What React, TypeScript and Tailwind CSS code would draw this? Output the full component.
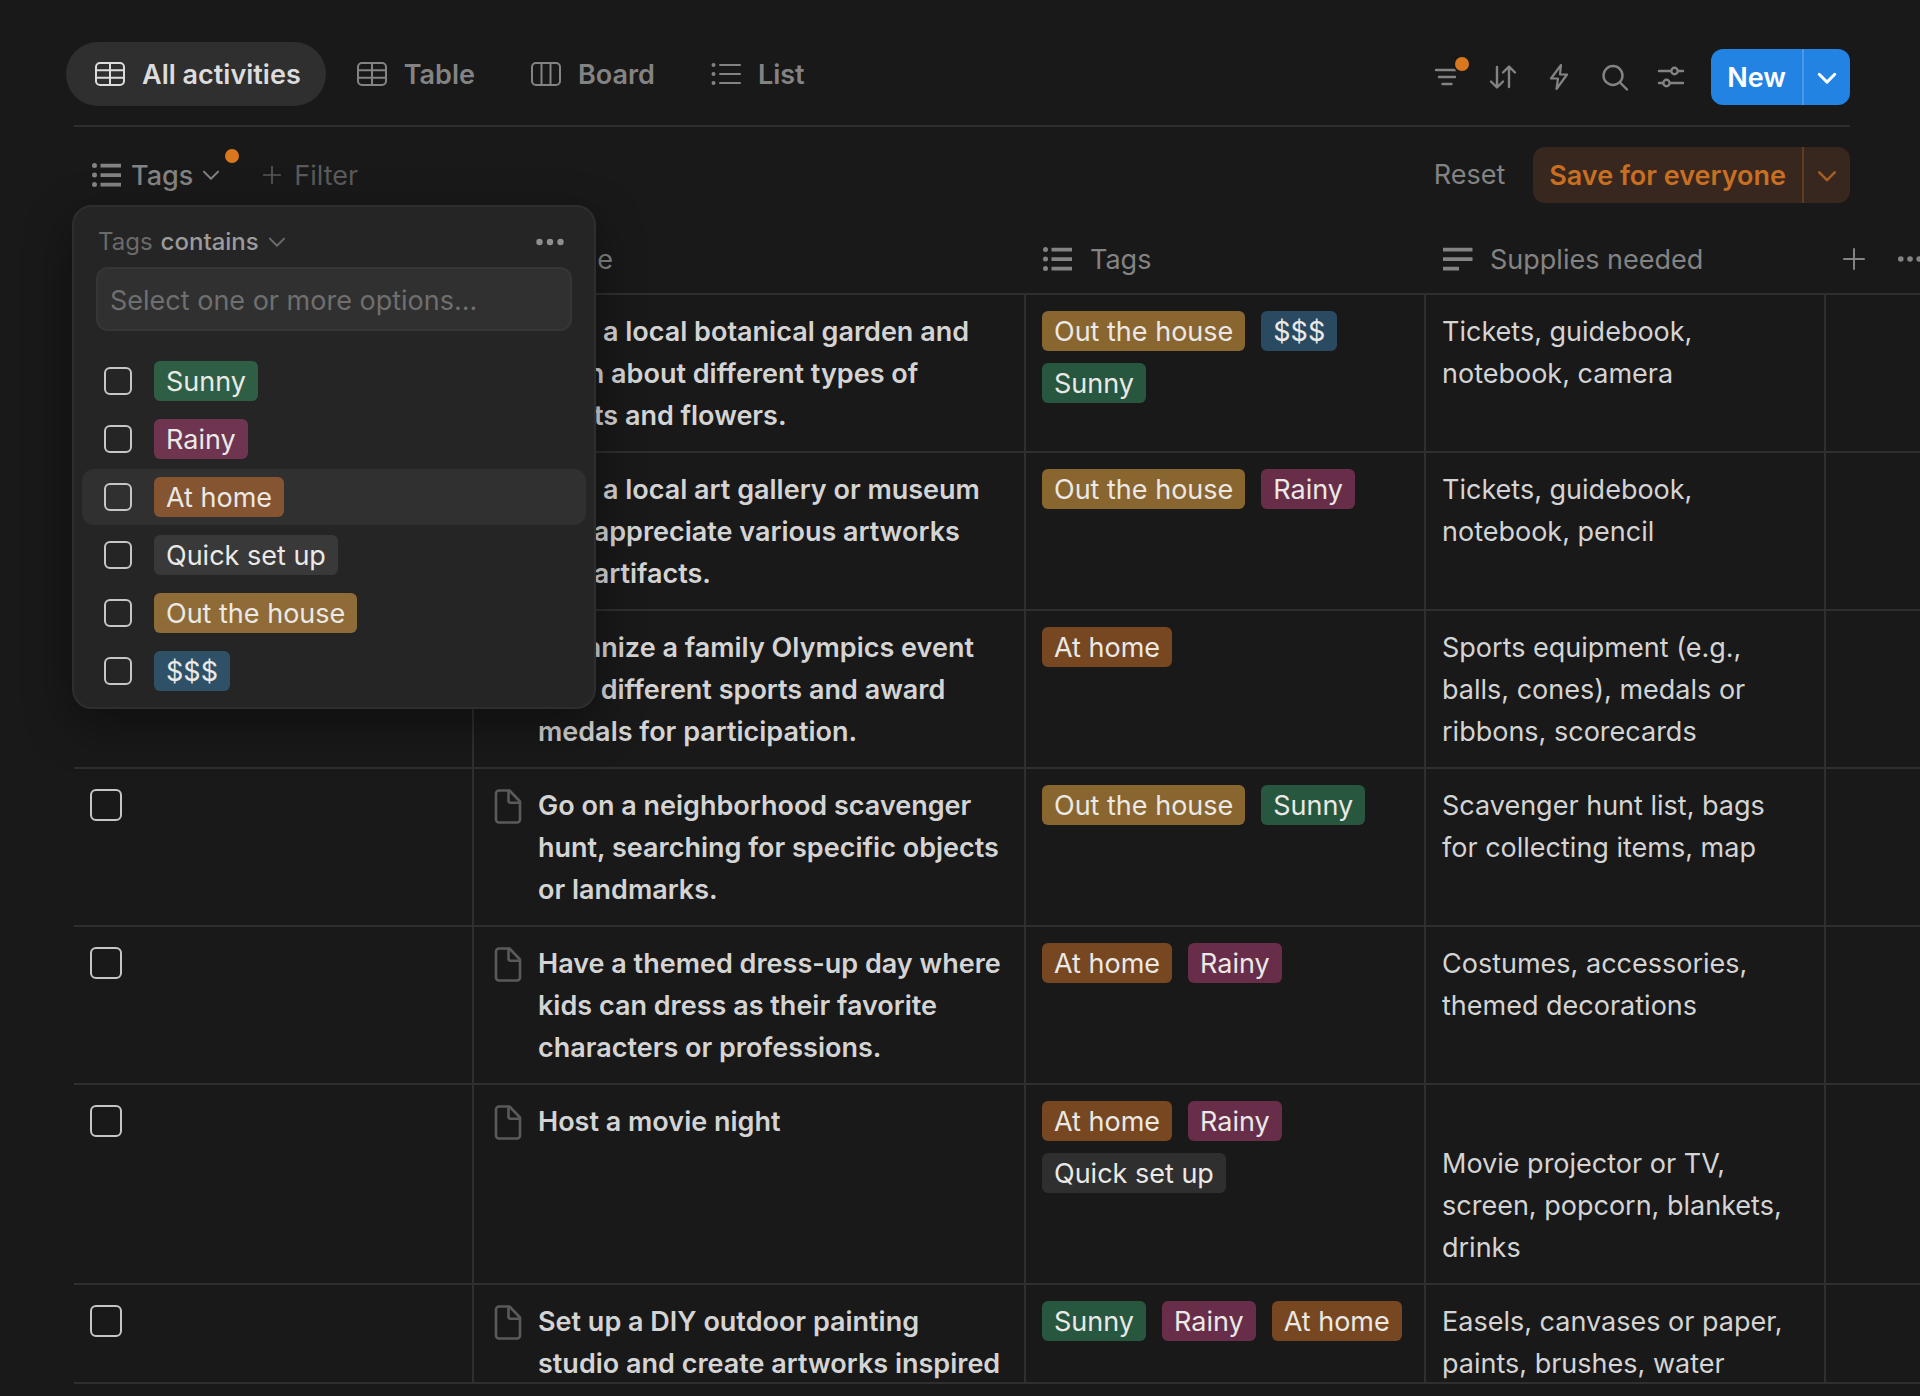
import React, { useState } from "react";

type TagName = "Sunny" | "Rainy" | "At home" | "Quick set up" | "Out the house" | "$$$";

const cellTagColors: Record<TagName, string> = {
  Sunny: "bg-[#28573f]",
  Rainy: "bg-[#682d49]",
  "At home": "bg-[#774721]",
  "Quick set up": "bg-[#2f2f2f]",
  "Out the house": "bg-[#89652f]",
  $$$: "bg-[#294a61]",
};

const menuTagColors: Record<TagName, string> = {
  Sunny: "bg-[#2e5f45]",
  Rainy: "bg-[#6e3450]",
  "At home": "bg-[#855531]",
  "Quick set up": "bg-[#393939]",
  "Out the house": "bg-[#8e6b37]",
  $$$: "bg-[#2f5168]",
};

const options: TagName[] = ["Sunny", "Rainy", "At home", "Quick set up", "Out the house", "$$$"];

const rows: { name: string; tags: TagName[]; supplies: string }[] = [
  {
    name: "Visit a local botanical garden and learn about different types of plants and flowers.",
    tags: ["Out the house", "$$$", "Sunny"],
    supplies: "Tickets, guidebook, notebook, camera",
  },
  {
    name: "Visit a local art gallery or museum and appreciate various artworks and artifacts.",
    tags: ["Out the house", "Rainy"],
    supplies: "Tickets, guidebook, notebook, pencil",
  },
  {
    name: "Organize a family Olympics event with different sports and award medals for participation.",
    tags: ["At home"],
    supplies: "Sports equipment (e.g., balls, cones), medals or ribbons, scorecards",
  },
  {
    name: "Go on a neighborhood scavenger hunt, searching for specific objects or landmarks.",
    tags: ["Out the house", "Sunny"],
    supplies: "Scavenger hunt list, bags for collecting items, map",
  },
  {
    name: "Have a themed dress-up day where kids can dress as their favorite characters or professions.",
    tags: ["At home", "Rainy"],
    supplies: "Costumes, accessories, themed decorations",
  },
  {
    name: "Host a movie night",
    tags: ["At home", "Rainy", "Quick set up"],
    supplies: "\nMovie projector or TV, screen, popcorn, blankets, drinks",
  },
  {
    name: "Set up a DIY outdoor painting studio and create artworks inspired",
    tags: ["Sunny", "Rainy", "At home"],
    supplies: "Easels, canvases or paper, paints, brushes, water",
  },
];

const stroke = {
  fill: "none",
  stroke: "currentColor",
  strokeWidth: 2,
  strokeLinecap: "round" as const,
  strokeLinejoin: "round" as const,
};

const TableIcon = () => (
  <svg className="size-8 shrink-0" viewBox="0 0 32 32" {...stroke}>
    <rect x="2" y="5" width="28" height="22" rx="4" />
    <path d="M2 12.300h28M2 19.700h28M16 5v22" />
  </svg>
);

const BoardIcon = () => (
  <svg className="size-8 shrink-0" viewBox="0 0 32 32" {...stroke}>
    <rect x="2" y="5" width="28" height="22" rx="4" />
    <path d="M11.500 5v22M20.500 5v22" />
  </svg>
);

const ListIcon = () => (
  <svg className="size-8 shrink-0" viewBox="0 0 32 32" {...stroke}>
    <path d="M10 7h20M10 16h20M10 25h20" />
    <g fill="currentColor" stroke="none">
      <circle cx="3.500" cy="7" r="2" />
      <circle cx="3.500" cy="16" r="2" />
      <circle cx="3.500" cy="25" r="2" />
    </g>
  </svg>
);

const MultiSelectIcon = () => (
  <svg className="size-8 shrink-0" viewBox="0 0 32 32" fill="currentColor">
    <circle cx="3.500" cy="6.500" r="2.500" />
    <circle cx="3.500" cy="16" r="2.500" />
    <circle cx="3.500" cy="25.500" r="2.500" />
    <path d="M9.500 4.700h20.500v3.700h-20.500zM9.500 14.200h20.500v3.700h-20.500zM9.500 23.700h20.500v3.700h-20.500z" />
  </svg>
);

const TextIcon = () => (
  <svg className="size-8 shrink-0" viewBox="0 0 32 32" fill="currentColor">
    <path d="M1 4.700h29.500v3.700H1zM1 14.200h29.500v3.700H1zM1 23.700h16v3.700H1z" />
  </svg>
);

const Chevron = ({ className }: { className: string }) => (
  <svg className={className} viewBox="0 0 24 24" {...stroke} strokeWidth={undefined}>
    <path d="M3.500 8l8.500 8.500L20.500 8" />
  </svg>
);

const PlusIcon = ({ className }: { className: string }) => (
  <svg className={className} viewBox="0 0 24 24" {...stroke}>
    <path d="M12 2v20M2 12h20" />
  </svg>
);

const DotsIcon = ({ className }: { className: string }) => (
  <svg className={className} viewBox="0 0 32 32" fill="currentColor">
    <circle cx="5.500" cy="16" r="3.200" />
    <circle cx="16" cy="16" r="3.200" />
    <circle cx="26.500" cy="16" r="3.200" />
  </svg>
);

const PageIcon = () => (
  <svg className="h-[35px] w-7 shrink-0" viewBox="0 0 28 35" {...stroke} strokeWidth="2.600">
    <path d="M15.500 1.500H5a3 3 0 0 0-3 3v26a3 3 0 0 0 3 3h18a3 3 0 0 0 3-3V12.500z" />
    <path d="M14.500 2v9.500a2.200 2.200 0 0 0 2.200 2.200H25.500" />
  </svg>
);

const FilterIcon = () => (
  <svg className="size-8" viewBox="0 0 32 32" {...stroke} strokeWidth="2.400">
    <path d="M5 9h20M8 16h16M11.500 23h9" />
  </svg>
);

const SortIcon = () => (
  <svg className="size-8" viewBox="0 0 32 32" {...stroke} strokeWidth="2.400">
    <path d="M10 6v20M4 20.500l6 6 6-6M22 26V6M16 11.500l6-6 6 6" />
  </svg>
);

const BoltIcon = () => (
  <svg className="size-8" viewBox="0 0 32 32" {...stroke} strokeWidth="2.200">
    <path d="M18 4L8 17.500h7L13.500 28 24 13.500h-7z" />
  </svg>
);

const SearchIcon = () => (
  <svg className="size-8" viewBox="0 0 32 32" {...stroke} strokeWidth="2.400">
    <circle cx="14" cy="14.500" r="9.500" />
    <path d="M21 21.500l7 7" />
  </svg>
);

const SlidersIcon = () => (
  <svg className="size-8" viewBox="0 0 32 32" {...stroke} strokeWidth="2.400">
    <path d="M4 10h12M23 10h5M4 22h4M15 22h13" />
    <circle cx="19.500" cy="10" r="3.200" />
    <circle cx="11.500" cy="22" r="3.200" />
  </svg>
);

const Tag = ({ name, color }: { name: string; color: string }) => (
  <span
    className={"inline-flex h-10 items-center whitespace-nowrap rounded-md px-3 pt-0.5 text-[27px] text-[#ebe9e6] " + color}
  >
    {name}
  </span>
);

const Label = ({ children }: { children: React.ReactNode }) => <span className="pt-0.5">{children}</span>;

const tabs = [
  { label: "All activities", Icon: TableIcon },
  { label: "Table", Icon: TableIcon },
  { label: "Board", Icon: BoardIcon },
  { label: "List", Icon: ListIcon },
];

const tools = [
  { label: "Filter", Icon: FilterIcon, dot: true },
  { label: "Sort", Icon: SortIcon },
  { label: "Automations", Icon: BoltIcon },
  { label: "Search", Icon: SearchIcon },
  { label: "View settings", Icon: SlidersIcon },
];

function FilterMenu() {
  const [checked, setChecked] = useState<TagName[]>([]);
  const toggle = (t: TagName) =>
    setChecked((c) => (c.includes(t) ? c.filter((x) => x !== t) : [...c, t]));

  return (
    <div className="absolute top-full -left-[19px] z-20 mt-0.5 w-[524px] rounded-[20px] border-2 border-[#2e2e2e] bg-[#252525] px-2 pt-3.5 pb-2 shadow-[0_16px_48px_rgba(0,0,0,0.4)]">
      <div className="flex h-[42px] items-center justify-between pr-5 pl-4">
        <button type="button" className="flex items-center gap-2 text-2xl text-[#6a6a6a]">
          Tags <span className="font-medium text-[#9b9b9b]">contains</span>
          <Chevron className="size-5 stroke-[2.4]" />
        </button>
        <button type="button" aria-label="Filter options" className="text-[#8f8f8f]">
          <DotsIcon className="size-8" />
        </button>
      </div>
      <div className="px-3.5 pt-1">
        <input
          type="text"
          aria-label="Select one or more options"
          placeholder="Select one or more options..."
          className="h-16 w-full rounded-xl border-2 border-[#363636] bg-[#303030] px-3 pt-0.5 text-[27px] text-[#d4d4d4] outline-none placeholder:text-[#6f6f6f]"
        />
      </div>
      <div className="flex flex-col gap-0.5 pt-[22px]">
        {options.map((t) => (
          <label
            key={t}
            className={"flex h-14 items-center gap-[22px] rounded-xl px-[22px] " + (t === "At home" ? "bg-[#303030]" : "")}
          >
            <input
              type="checkbox"
              checked={checked.includes(t)}
              onChange={() => toggle(t)}
              className="size-7 appearance-none rounded-md border-2 border-[#c6c6c6] checked:bg-[#2383e2]"
            />
            <Tag name={t} color={menuTagColors[t]} />
          </label>
        ))}
      </div>
    </div>
  );
}

const th = "h-[70px] border-b-2 border-[#2f2f2f] px-4 text-left font-normal";
const td = "border-r-2 border-b-2 border-[#2f2f2f] pt-4 pr-[21px] pb-3.5 pl-4 align-top";

export default function App() {
  return (
    <div className="flex h-screen flex-col overflow-hidden bg-[#191919] pt-[42px] pb-3 pl-[74px] font-['Inter',sans-serif] text-[27px] text-[#d4d4d4]">
      <header className="mr-[70px] flex items-end justify-between border-b-2 border-[#2f2f2f] pb-[19px]">
        <nav className="-ml-2 flex gap-0.5">
          {tabs.map(({ label, Icon }, i) => (
            <button
              key={label}
              type="button"
              className={
                "flex h-16 items-center gap-4 rounded-full pr-[25px] pl-7 font-semibold " +
                (i === 0 ? "bg-[#2f2f2f] text-[#dcdcdc]" : "text-[#838383]")
              }
            >
              <Icon />
              <Label>{label}</Label>
            </button>
          ))}
        </nav>
        <div className="mb-px flex h-14 items-center gap-6 text-[#838383]">
          {tools.map(({ label, Icon, dot }) => (
            <button key={label} type="button" aria-label={label} className="relative">
              <Icon />
              {dot && (
                <span className="absolute -top-1 -right-1.5 size-3.5 rounded-full bg-[#d9771f] ring-2 ring-[#191919]" />
              )}
            </button>
          ))}
          <div className="flex h-14 overflow-hidden rounded-xl bg-[#2383e2] font-semibold text-white">
            <button type="button" className="px-4 pt-0.5">
              New
            </button>
            <button type="button" aria-label="More new options" className="border-l-2 border-[#4a98e8] px-3 pt-0.5">
              <Chevron className="size-[22px] stroke-[3.2]" />
            </button>
          </div>
        </div>
      </header>

      <div className="mr-[70px] flex items-center justify-between pt-5 pb-[22px]">
        <div className="flex items-center">
          <div className="relative ml-[17px] h-14">
            <button type="button" className="flex h-14 items-center gap-2 font-medium text-[#838383]">
              <MultiSelectIcon />
              <Label>Tags</Label>
              <Chevron className="size-5 stroke-[2.4]" />
            </button>
            <span className="absolute top-0.5 -right-[18px] size-3.5 rounded-full bg-[#d9771f]" />
            <FilterMenu />
          </div>
          <button type="button" className="ml-[41px] flex items-center gap-3 text-[#5a5a5a]">
            <PlusIcon className="size-5" />
            <Label>Filter</Label>
          </button>
        </div>
        <div className="flex items-center gap-7">
          <button type="button" className="text-[#838383]">
            Reset
          </button>
          <div className="flex h-14 overflow-hidden rounded-xl bg-[#38271f] font-semibold text-[#c96f22]">
            <button type="button" className="px-4 pt-0.5">
              Save for everyone
            </button>
            <button
              type="button"
              aria-label="More save options"
              className="border-l-2 border-[#5f3c20] px-3 pt-0.5 text-[#a55e24]"
            >
              <Chevron className="size-[22px] stroke-[2.8]" />
            </button>
          </div>
        </div>
      </div>

      <div className="min-h-0 flex-1 overflow-hidden border-b-2 border-[#2f2f2f]">
        <table className="w-full table-fixed border-separate border-spacing-0">
          <colgroup>
            <col className="w-[400px]" />
            <col className="w-[552px]" />
            <col className="w-[400px]" />
            <col className="w-[400px]" />
            <col />
          </colgroup>
          <thead className="text-[#838383]">
            <tr>
              <th className={th} aria-label="Done" />
              <th className={th}>
                <span className="flex items-center gap-4">
                  <TextIcon />
                  <Label>Name</Label>
                </span>
              </th>
              <th className={th}>
                <span className="flex items-center gap-4">
                  <MultiSelectIcon />
                  <Label>Tags</Label>
                </span>
              </th>
              <th className={th}>
                <span className="flex items-center gap-4">
                  <TextIcon />
                  <Label>Supplies needed</Label>
                </span>
              </th>
              <th className={th}>
                <span className="flex items-center gap-[30px]">
                  <button type="button" aria-label="Add property" className="shrink-0">
                    <PlusIcon className="size-6" />
                  </button>
                  <button type="button" aria-label="More properties" className="shrink-0">
                    <DotsIcon className="size-7" />
                  </button>
                </span>
              </th>
            </tr>
          </thead>
          <tbody className="leading-[42px]">
            {rows.map((r) => (
              <tr key={r.name}>
                <td className={td}>
                  <input
                    type="checkbox"
                    aria-label={"Done: " + r.name}
                    className="mt-1 block size-8 appearance-none rounded-md border-2 border-[#c6c6c6] checked:bg-[#2383e2]"
                  />
                </td>
                <td className={td}>
                  <div className="flex items-start gap-4 pl-1">
                    <span className="mt-1 text-[#5a5a5a]">
                      <PageIcon />
                    </span>
                    <span className="font-semibold">{r.name}</span>
                  </div>
                </td>
                <td className={td}>
                  <div className="-mr-4 flex flex-wrap gap-x-4 gap-y-3">
                    {r.tags.map((t) => (
                      <Tag key={t} name={t} color={cellTagColors[t]} />
                    ))}
                  </div>
                </td>
                <td className={td + " whitespace-pre-line"}>{r.supplies}</td>
                <td className="border-b-2 border-[#2f2f2f]" />
              </tr>
            ))}
          </tbody>
        </table>
      </div>
    </div>
  );
}
